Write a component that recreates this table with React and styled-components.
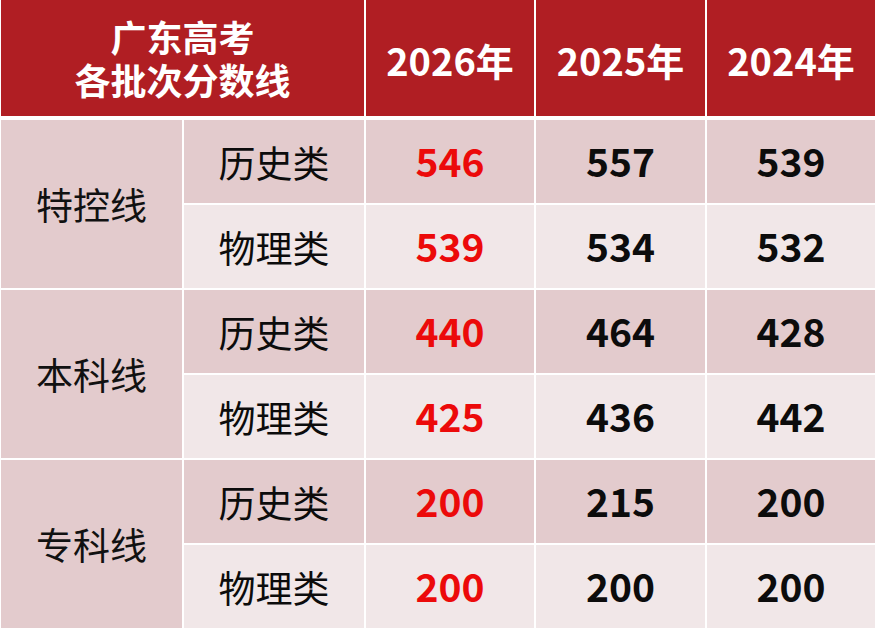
import React from 'react'
import styled, { createGlobalStyle } from 'styled-components'

const GlobalStyle = createGlobalStyle`
  html, body {
    margin: 0;
    padding: 0;
    background: #ffffff;
  }
  body {
    font-family: "Noto Sans CJK SC", "Noto Sans", sans-serif;
  }
`

const COLUMNS = '181px 180px 168px 169px 168px'

const Sheet = styled.div`
  width: 876px;
  height: 630px;
  background: #ffffff;
  display: flex;
  flex-direction: column;
  overflow: hidden;
`

const HeadRow = styled.div`
  display: grid;
  grid-template-columns: 363px 168px 169px 168px;
  column-gap: 2px;
  padding: 0 2px 0 1px;
  height: 116px;
`

const HeadCell = styled.div`
  background: #b01e23;
  color: #ffffff;
  font-weight: 700;
  font-size: 38px;
  line-height: 1;
  display: flex;
  align-items: center;
  justify-content: center;
  padding-top: 3px;
`

const TitleCell = styled(HeadCell)`
  flex-direction: column;
  font-size: 36px;
  padding-top: 0;
`

const TitleLine = styled.span`
  display: block;
  line-height: 43px;
`

const Body = styled.div`
  margin-top: 4px;
  display: grid;
  grid-template-columns: ${COLUMNS};
  grid-template-rows: repeat(6, 83px);
  gap: 2px;
  padding: 0 1px;
`

const Group = styled.div`
  grid-row: span 2;
  background: #e3cbcd;
  color: #111111;
  font-size: 37px;
  display: flex;
  align-items: center;
  justify-content: center;
`

const Cell = styled.div`
  background: ${p => (p.$shade ? '#e3cbcd' : '#f1e7e8')};
  color: ${p => (p.$hot ? '#ec0a0a' : '#0c0c0c')};
  font-size: ${p => (p.$num ? '39px' : '37px')};
  font-weight: ${p => (p.$num ? 700 : 400)};
  display: flex;
  align-items: center;
  justify-content: center;
  padding-bottom: ${p => (p.$num ? '4px' : '0')};
`

const groups = [
  { name: '特控线', rows: [['历史类', 546, 557, 539], ['物理类', 539, 534, 532]] },
  { name: '本科线', rows: [['历史类', 440, 464, 428], ['物理类', 425, 436, 442]] },
  { name: '专科线', rows: [['历史类', 200, 215, 200], ['物理类', 200, 200, 200]] }
]

export default function App() {
  return (
    <Sheet>
      <GlobalStyle />
      <HeadRow>
        <TitleCell>
          <TitleLine>广东高考</TitleLine>
          <TitleLine>各批次分数线</TitleLine>
        </TitleCell>
        <HeadCell>2026年</HeadCell>
        <HeadCell>2025年</HeadCell>
        <HeadCell>2024年</HeadCell>
      </HeadRow>
      <Body>
        {groups.map(g => (
          <React.Fragment key={g.name}>
            <Group>{g.name}</Group>
            {g.rows.map((r, i) => (
              <React.Fragment key={r[0]}>
                <Cell $shade={i === 0}>{r[0]}</Cell>
                <Cell $shade={i === 0} $num $hot>{r[1]}</Cell>
                <Cell $shade={i === 0} $num>{r[2]}</Cell>
                <Cell $shade={i === 0} $num>{r[3]}</Cell>
              </React.Fragment>
            ))}
          </React.Fragment>
        ))}
      </Body>
    </Sheet>
  )
}
